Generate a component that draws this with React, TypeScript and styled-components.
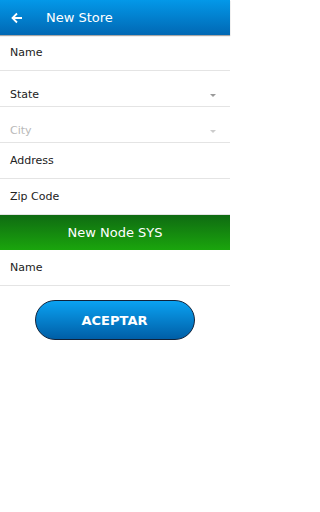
import React from 'react'
import styled, { createGlobalStyle } from 'styled-components'

const GlobalStyle = createGlobalStyle`
    html, body {
        margin: 0;
        padding: 0;
        background: #ffffff;
        font-family: "DejaVu Sans", "Liberation Sans", sans-serif;
    }
`

const Page = styled.div`
    width: 230px;
    min-height: 512px;
    background: #ffffff;
`

const Header = styled.div`
    height: 35px;
    display: flex;
    align-items: center;
    background: linear-gradient(#0398e8, #0168b4);
    box-shadow: 0 1px 1px rgba(0, 0, 0, 0.35);
    position: relative;
    z-index: 1;
`

const BackButton = styled.div`
    width: 46px;
    display: flex;
    align-items: center;
    padding-left: 11px;
    box-sizing: border-box;
`

const Title = styled.div`
    color: #ffffff;
    font-size: 13px;
`

const Field = styled.div<{ $placeholder?: boolean; $select?: boolean }>`
    height: 36px;
    box-sizing: border-box;
    border-bottom: 1px solid #e4e4e4;
    display: flex;
    align-items: center;
    justify-content: space-between;
    padding: ${p => (p.$select ? '11px 14px 0 10px' : '0 14px 0 10px')};
    font-size: 11px;
    color: ${p => (p.$placeholder ? '#b9b9b9' : '#222222')};
`

const Caret = styled.span<{ $light?: boolean }>`
    width: 0;
    height: 0;
    border-left: 3px solid transparent;
    border-right: 3px solid transparent;
    border-top: 3px solid ${p => (p.$light ? '#cccccc' : '#9a9a9a')};
    margin-top: 2px;
`

const SectionBand = styled.div`
    height: 35px;
    display: flex;
    align-items: center;
    justify-content: center;
    background: linear-gradient(#0f6b12, #1aa50c);
    color: #ffffff;
    font-size: 13px;
`

const ButtonRow = styled.div`
    display: flex;
    justify-content: center;
    padding-top: 14px;
`

const SubmitButton = styled.button`
    width: 160px;
    height: 40px;
    border-radius: 20px;
    border: 1px solid #10223a;
    background: linear-gradient(#0aa2f2, #005ea6);
    color: #ffffff;
    font-family: "DejaVu Sans", "Liberation Sans", sans-serif;
    font-weight: bold;
    font-size: 13px;
    padding: 0;
    margin-left: -1px;
`

const ArrowIcon = () => (
    <svg width="12" height="12" viewBox="0 0 12 12">
        <path d="M11 6H1.5M6 1.5L1.5 6L6 10.5" stroke="#ffffff" strokeWidth="1.8" fill="none" />
    </svg>
)

const App: React.FC = () => {
    return (
        <>
            <GlobalStyle />
            <Page>
                <Header>
                    <BackButton><ArrowIcon /></BackButton>
                    <Title>New Store</Title>
                </Header>
                <Field>Name</Field>
                <Field $select>State<Caret /></Field>
                <Field $select $placeholder>City<Caret $light /></Field>
                <Field>Address</Field>
                <Field>Zip Code</Field>
                <SectionBand>New Node SYS</SectionBand>
                <Field>Name</Field>
                <ButtonRow>
                    <SubmitButton>ACEPTAR</SubmitButton>
                </ButtonRow>
            </Page>
        </>
    )
}

export default App
